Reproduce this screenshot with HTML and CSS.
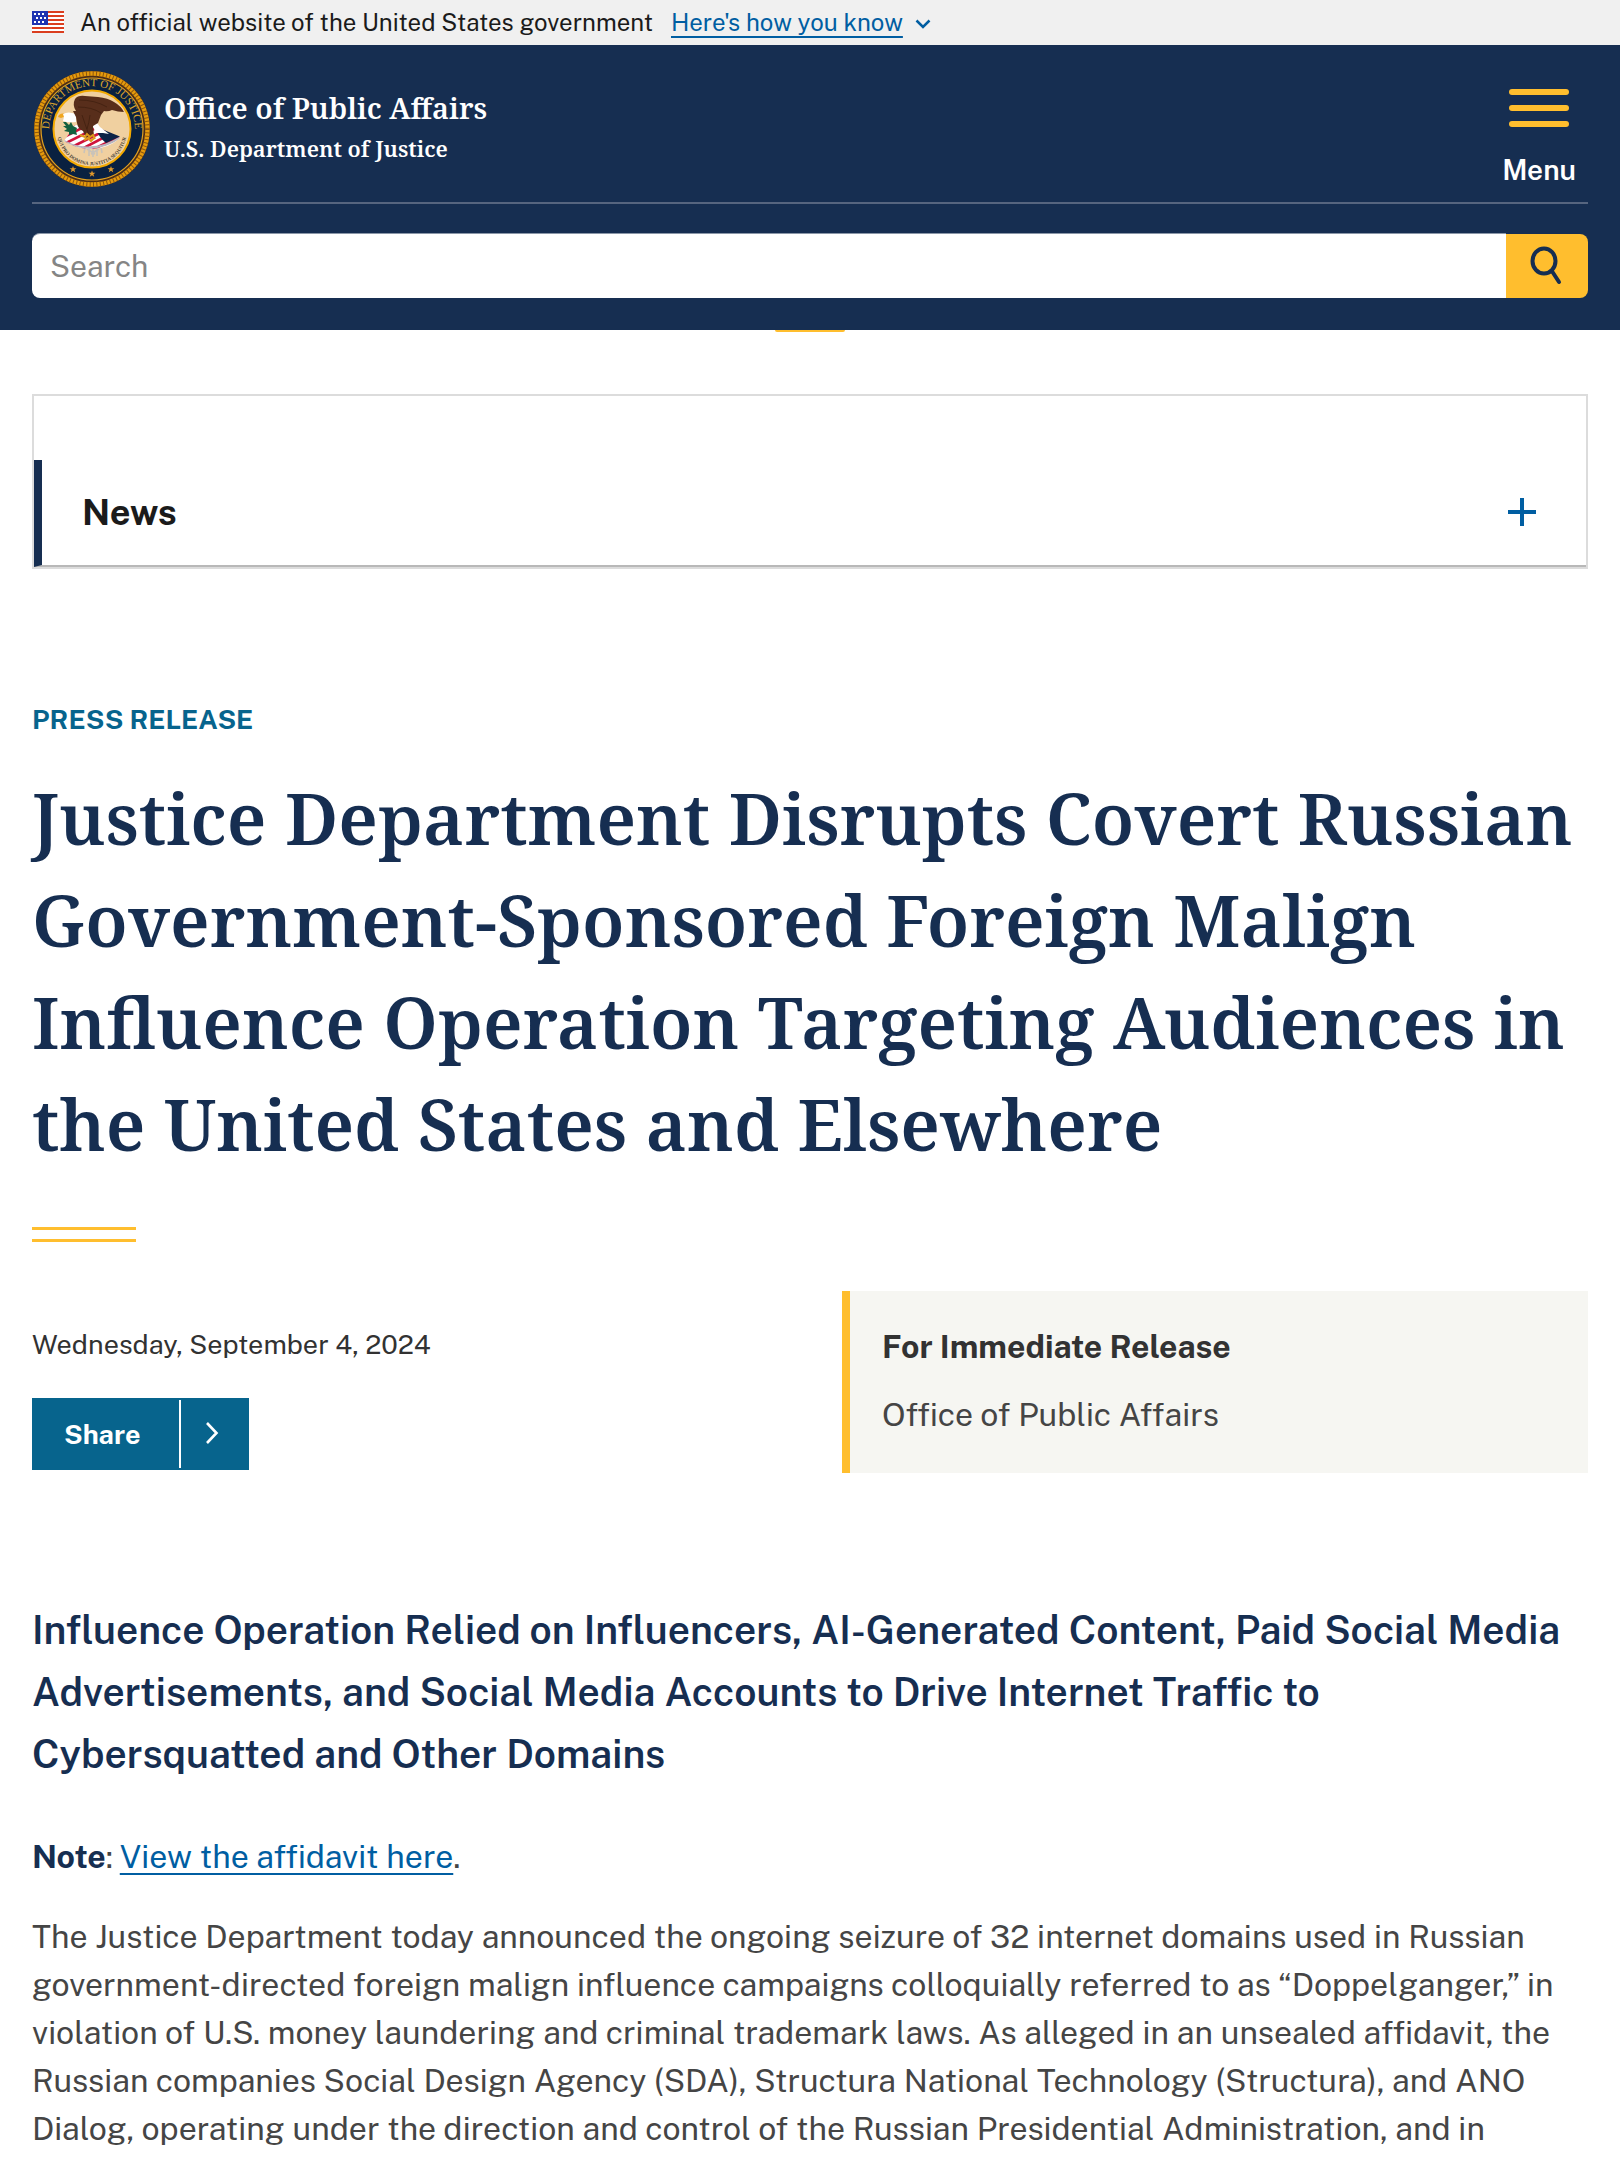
FILE: index.html
```html
<!DOCTYPE html>
<html lang="en">
<head>
<meta charset="utf-8">
<meta name="viewport" content="width=device-width, initial-scale=1">
<title>Justice Department Disrupts Covert Russian Government-Sponsored Foreign Malign Influence Operation</title>
<link rel="stylesheet" href="styles.css">
</head>
<body>
<div class="banner">
  <svg class="banner-flag" viewBox="0 0 32 22" aria-hidden="true">
    <rect width="32" height="22" fill="#fff"/>
    <path d="M0 1h32M0 5h32M0 9h32M0 13h32M0 17h32M0 21h32" stroke="#db3e1f" stroke-width="2"/>
    <rect width="16" height="14" fill="#1e33b1"/>
    <path d="M2 3h12M4 7h12M2 11h12" stroke="#fff" stroke-width="2" stroke-dasharray="2 2"/>
  </svg>
  <span>An official website of the United States government</span>
  <button class="banner-toggle" type="button"><span class="underlined">Here's how you know</span>
    <svg class="banner-chevron" viewBox="0 0 16 10" aria-hidden="true"><path d="M1.500 1.500L8 8l6.500-6.500" fill="none" stroke="currentColor" stroke-width="2.500"/></svg>
  </button>
</div>

<header class="site-header">
  <div class="header-top">
    <a class="brand" href="#">
      <svg class="seal" viewBox="0 0 120 120" aria-hidden="true">
        <defs>
          <path id="arc-top" d="M18.800 72A42.900 42.900 0 1 1 101.200 72"/>
          <path id="arc-bottom" d="M26 53A35 35 0 1 0 94 53"/>
          <clipPath id="shield"><path d="M43 56L64 57 88 69Q76 80 59 80 42 79 32 72z"/></clipPath>
        </defs>
        <circle cx="60" cy="60" r="58" fill="#4b2d17"/>
        <circle cx="60" cy="60" r="55.500" fill="none" stroke="#e59a0c" stroke-width="4.400"/>
        <circle cx="60" cy="60" r="55.500" fill="none" stroke="#8a5510" stroke-width="5" stroke-dasharray="1 2.400"/>
        <circle cx="60" cy="60" r="51" fill="#0a2140" stroke="#e0a020" stroke-width="1.200"/>
        <circle cx="60" cy="60" r="38.500" fill="#f0d0a0" stroke="#f2a900" stroke-width="2"/>
        <text class="seal-name"><textPath href="#arc-top" startOffset="50%">DEPARTMENT OF JUSTICE</textPath></text>
        <text class="seal-motto"><textPath href="#arc-bottom" startOffset="50%">QUI PRO DOMINA JUSTITIA SEQUITUR</textPath></text>
        <path d="M53 79l-1 5M57 79v8M61 79v9M65 79v8M69 78l1 6M55 80l8 5M67 80l-8 5" stroke="#c9c3ba" stroke-width="1.600" fill="none"/>
        <g clip-path="url(#shield)">
          <path d="M30 50h60v32H30z" fill="#fff"/>
          <path d="M30 62l22-12M30 69l34-17M30 76l44-22M38 79l42-21M48 81l40-21M58 82l36-18" stroke="#d0143c" stroke-width="2.600"/>
          <path d="M30 71Q44 80 59 78.500 74 78 89 68" fill="none" stroke="#b9b6be" stroke-width="2.400"/>
        </g>
        <path d="M62 57L88 67.500 74 74Q68 70 62 57z" fill="#0c2347"/>
        <path d="M63 51l5 7 9 7-6-1-7 0-3-6z" fill="#fff"/>
        <path d="M26 48q1-4 6-3.500l2 2.500-5 2z" fill="#f0a51e"/>
        <path d="M31 45q5-3 13 0v8q-8 1-13-1l1-4z" fill="#fff"/>
        <path d="M43 30Q46 26 53 27L66 28Q76 29 82 33 89 37 92 43 86 43 80 41 76 43 72 42L69 46 66 54 61 57 62 67 54 69 51 62Q46 60 45 54L44 48 41 42 44 42Q40 36 43 30z" fill="#582e1b"/>
        <path d="M47 31q16 0 28 7M46 38q14 0 23 6M50 46q3 9 7 20M58 46q-1 8-3 14" stroke="#40200f" stroke-width=".8" fill="none"/>
        <path d="M31 53l3 4-3 0 4 3-3 2 5 1 0 3 4-1 4 1-1-4 1-3-4-2-2-4-2 3-3-3z" fill="#12603f"/>
        <path d="M48 66l5 2 2-3 3 3 3-2 2 4M52 71l4-2 3 3 3-3" stroke="#dd9a1b" stroke-width="2" fill="none"/>
        <path id="star" d="M60 101.500l.9 2.300h2.500l-2 1.500.8 2.500-2.200-1.500-2.200 1.500.8-2.500-2-1.500h2.500z" fill="#e0982a"/>
        <use href="#star" x="-19" y="-4.500"/>
        <use href="#star" x="19" y="-4.500"/>
      </svg>
      <span class="brand-text">
        <span class="brand-name">Office of Public Affairs</span>
        <span class="brand-parent">U.S. Department of Justice</span>
      </span>
    </a>
    <button class="menu-button" type="button">
      <span class="menu-bars"><span class="menu-bar"></span><span class="menu-bar"></span><span class="menu-bar"></span></span>
      <span>Menu</span>
    </button>
  </div>
  <form class="search" role="search">
    <input class="search-input" type="search" placeholder="Search" aria-label="Search">
    <button class="search-button" type="submit" aria-label="Submit search">
      <svg class="search-icon" viewBox="0 0 40 44" aria-hidden="true"><ellipse cx="17" cy="17" rx="11.500" ry="12.500" fill="none" stroke="currentColor" stroke-width="4"/><path d="M25.500 28l6.500 10" stroke="currentColor" stroke-width="4" stroke-linecap="round"/></svg>
    </button>
  </form>
</header>
<div class="header-tab"></div>

<main class="page">
  <nav class="section-nav" aria-label="Section">
    <button class="section-toggle" type="button">
      <span>News</span>
      <svg class="plus-icon" viewBox="0 0 28 28" aria-hidden="true"><path d="M14 0v28M0 14h28" stroke="currentColor" stroke-width="4"/></svg>
    </button>
  </nav>

  <article>
    <p class="kicker">PRESS RELEASE</p>
    <h1 class="title">Justice Department Disrupts Covert Russian Government-Sponsored Foreign Malign Influence Operation Targeting Audiences in the United States and Elsewhere</h1>
    <div class="title-rule"></div>

    <div class="meta">
      <div class="meta-main">
        <time class="date" datetime="2024-09-04">Wednesday, September 4, 2024</time>
        <button class="share" type="button">
          <span class="share-label">Share</span>
          <span class="share-arrow"><svg class="share-chevron" viewBox="0 0 14 24" aria-hidden="true"><path d="M2 2l9.500 10L2 22" fill="none" stroke="currentColor" stroke-width="2.600"/></svg></span>
        </button>
      </div>
      <aside class="release">
        <h2 class="release-title">For Immediate Release</h2>
        <p class="release-office">Office of Public Affairs</p>
      </aside>
    </div>

    <h2 class="subtitle">Influence Operation Relied on Influencers, AI-Generated Content, Paid Social Media Advertisements, and Social Media Accounts to Drive Internet Traffic to Cybersquatted and Other Domains</h2>
    <div class="body-text">
      <p><strong>Note</strong>: <a class="underlined" href="#">View the affidavit here</a>.</p>
      <p>The Justice Department today announced the ongoing seizure of 32 internet domains used in Russian government-directed foreign malign influence campaigns colloquially referred to as “Doppelganger,” in violation of U.S. money laundering and criminal trademark laws. As alleged in an unsealed affidavit, the Russian companies Social Design Agency (SDA), Structura National Technology (Structura), and ANO Dialog, operating under the direction and control of the Russian Presidential Administration, and in</p>
    </div>
  </article>
</main>
</body>
</html>
```
FILE: styles.css
```css
:root {
  --navy: #162e51;
  --gold: #ffbe2e;
  --link: #005ea2;
  --teal: #07648d;
  --sans: "Public Sans", Inter, "Liberation Sans", sans-serif;
  --serif: "Source Serif Pro", "Noto Serif", "Liberation Serif", serif;
}

* { box-sizing: border-box; }

body {
  margin: 0;
  background: #fff;
  color: #454545;
  font-family: var(--sans);
}

h1, h2, p { margin: 0; }

button {
  margin: 0;
  padding: 0;
  border: 0;
  background: none;
  color: inherit;
  font: inherit;
  cursor: pointer;
}

svg { display: block; flex: none; }

.underlined {
  color: var(--link);
  text-decoration: underline 2px;
  text-underline-offset: 5px;
  text-decoration-skip-ink: none;
}

/* Government banner */
.banner {
  display: flex;
  align-items: center;
  height: 45px;
  padding: 0 32px 2px;
  background: #f0f0f0;
  color: #1b1b1b;
  font-size: 24px;
}
.banner-flag { width: 32px; height: 22px; margin-right: 16px; }
.banner-toggle {
  display: flex;
  align-items: center;
  gap: 12px;
  margin-left: 18px;
  color: var(--link);
}
.banner-chevron { width: 16px; height: 10px; margin-top: 4px; }

/* Header */
.site-header {
  padding: 0 32px 32px;
  background: var(--navy);
  color: #fff;
}
.header-top {
  display: flex;
  justify-content: space-between;
  align-items: flex-start;
  padding: 24px 0 13px;
  border-bottom: 2px solid #56657f;
}
.brand {
  display: flex;
  align-items: center;
  gap: 12px;
  color: #fff;
  text-decoration: none;
  font-family: var(--serif);
  font-weight: 600;
}
.seal { width: 120px; height: 120px; }
.seal-name {
  fill: #dca52c;
  font: 400 11px "Liberation Serif", serif;
  text-anchor: middle;
}
.seal-motto {
  fill: #4b4436;
  font: 700 5px "Liberation Serif", serif;
  text-anchor: middle;
}
.brand-text {
  display: flex;
  flex-direction: column;
  gap: 4px;
  padding-bottom: 6px;
}
.brand-name { font-size: 29px; line-height: 40px; }
.brand-parent { font-size: 22px; line-height: 32px; }
.menu-button {
  display: flex;
  flex-direction: column;
  align-items: center;
  gap: 27px;
  padding: 20px 12px 0;
  font-size: 28px;
  font-weight: 600;
  line-height: 32px;
}
.menu-bars { display: flex; flex-direction: column; gap: 10px; }
.menu-bar {
  width: 60px;
  height: 6px;
  border-radius: 3px;
  background: var(--gold);
}
.search { display: flex; align-items: flex-end; padding-top: 29px; }
.search-input {
  flex: 1;
  min-width: 0;
  height: 65px;
  margin: 0;
  padding: 0 18px;
  border: 0;
  border-top: 1px solid #8b97a8;
  border-radius: 8px 0 0 8px;
  background: #fff;
  color: #1b1b1b;
  font: 30px var(--sans);
  appearance: none;
}
.search-input::placeholder { color: #858585; opacity: 1; }
.search-button {
  display: flex;
  justify-content: center;
  align-items: center;
  width: 82px;
  height: 64px;
  border-radius: 0 8px 8px 0;
  background: var(--gold);
  color: var(--navy);
}
.search-icon { width: 40px; height: 44px; }
.header-tab {
  width: 70px;
  height: 2px;
  margin: 0 auto;
  border-radius: 0 0 2px 2px;
  background: var(--gold);
}

/* Page */
.page { padding: 62px 32px 64px; }
.section-nav {
  padding-top: 64px;
  border: 2px solid #dcdcdc;
}
.section-toggle {
  display: flex;
  justify-content: space-between;
  align-items: center;
  width: 100%;
  height: 107px;
  padding: 0 50px 2px 40px;
  border-bottom: 2px solid #b8b8b8;
  border-left: 8px solid var(--navy);
  color: #1b1b1b;
  font-size: 36px;
  font-weight: 700;
}
.plus-icon { width: 28px; height: 28px; color: var(--link); }

.kicker {
  margin-top: 130px;
  color: var(--teal);
  font-size: 27px;
  font-weight: 700;
  line-height: 40px;
}
.title {
  margin-top: 28px;
  color: var(--navy);
  font-family: var(--serif);
  font-size: 71px;
  font-weight: 600;
  line-height: 102px;
}
.title-rule {
  width: 104px;
  height: 15px;
  margin-top: 52px;
  border: solid var(--gold);
  border-width: 3px 0;
}

.meta {
  display: grid;
  grid-template-columns: 1fr 1fr;
  gap: 64px;
  margin-top: 49px;
}
.meta-main {
  display: flex;
  flex-direction: column;
  align-items: flex-start;
  gap: 34px;
  padding-top: 33px;
}
.date { color: #323232; font-size: 27px; line-height: 40px; }
.share {
  display: flex;
  height: 72px;
  padding: 2px 0;
  background: var(--teal);
  color: #fff;
  font-size: 27px;
  font-weight: 700;
}
.share-label { display: flex; align-items: center; padding: 0 38px 0 32px; }
.share-arrow {
  display: flex;
  align-items: center;
  padding: 0 30px 2px 24px;
  border-left: 2px solid #fff;
}
.share-chevron { width: 14px; height: 24px; }
.release {
  display: flex;
  flex-direction: column;
  gap: 20px;
  padding: 32px 32px 34px;
  border-left: 8px solid var(--gold);
  background: #f6f6f2;
  font-size: 32px;
  line-height: 48px;
}
.release-title { color: #323232; font-size: 32px; font-weight: 700; }

.subtitle {
  margin-top: 126px;
  color: var(--navy);
  font-size: 39px;
  font-weight: 600;
  line-height: 62px;
}
.body-text {
  display: flex;
  flex-direction: column;
  gap: 32px;
  margin-top: 48px;
  font-size: 32px;
  line-height: 48px;
}
.body-text strong { color: var(--navy); }
```
